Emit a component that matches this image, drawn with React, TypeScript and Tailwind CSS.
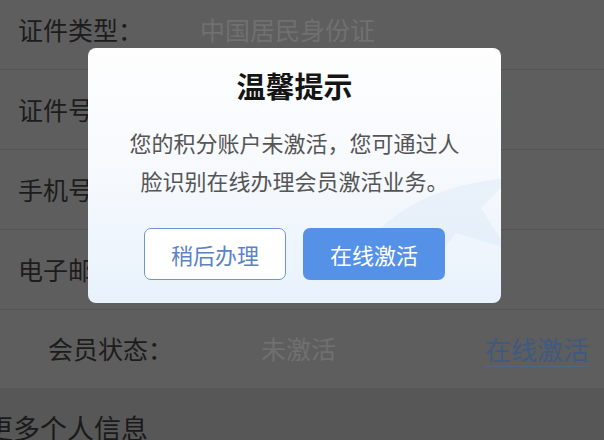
import React from "react";

const font = { fontFamily: '"Noto Sans CJK SC", "Noto Sans", sans-serif' };

type Row = { label: string; value?: string };

const rows: Row[] = [
  { label: "证件类型：", value: "中国居民身份证" },
  { label: "证件号码：" },
  { label: "手机号码：" },
  { label: "电子邮箱：" },
];

function InfoRow({ label, value }: Row) {
  return (
    <div className="flex h-[80px] items-center border-b border-[#545454] pl-[18px]">
      <span className="w-[182px] text-[25px] text-[#1c1c1c]">{label}</span>
      {value && <span className="text-[25px] text-[#707070]">{value}</span>}
    </div>
  );
}

function Dialog() {
  return (
    <div className="absolute left-[88px] top-[48px] h-[255px] w-[413px] overflow-hidden rounded-[8px] bg-gradient-to-b from-[#fefefe] via-[#f6f9fd] to-[#e8f2fc]">
      {/* faint watermark */}
      <svg
        className="absolute right-[-20px] top-[90px]"
        width="150"
        height="150"
        viewBox="0 0 150 150"
      >
        <path
          d="M5 95 C30 70 70 45 140 40 L110 70 L135 110 L85 95 L50 140 L60 100 Z"
          fill="#dce9f7"
          opacity="0.45"
        />
      </svg>
      <div className="relative flex h-full flex-col items-center px-[36px] pt-[19px]">
        <div className="text-[29px] font-bold leading-[36px] text-[#151515]">温馨提示</div>
        <p className="mt-[20px] text-center text-[22px] leading-[38px] text-[#555]">
          您的积分账户未激活，您可通过人脸识别在线办理会员激活业务。
        </p>
        <div className="mt-[29px] flex gap-[17px]">
          <button className="h-[52px] w-[142px] rounded-[7px] border-[1.5px] border-[#6f94d2] bg-white text-[22px] text-[#5a82c4]">
            稍后办理
          </button>
          <button className="h-[52px] w-[142px] rounded-[7px] bg-[#5591e7] text-[22px] text-white">
            在线激活
          </button>
        </div>
      </div>
    </div>
  );
}

export default function App() {
  return (
    <div className="relative h-[440px] w-[604px] overflow-hidden bg-[#5e5e5e]" style={font}>
      <div className="-mt-[10px]">
        {rows.map((r) => (
          <InfoRow key={r.label} {...r} />
        ))}
        <div className="flex h-[78px] items-center pl-[48px]">
          <span className="w-[213px] text-[25px] text-[#1c1c1c]">会员状态：</span>
          <span className="text-[25px] text-[#707070]">未激活</span>
          <span className="ml-auto mr-[15px] border-b border-[#4e6788] text-[26px] leading-[34px] text-[#3e5a80]">
            在线激活
          </span>
        </div>
        <div className="flex h-[80px] items-center bg-[#575757]">
          <span className="-ml-[14px] text-[27px] text-[#1a1a1a]">更多个人信息</span>
        </div>
      </div>
      <Dialog />
    </div>
  );
}
